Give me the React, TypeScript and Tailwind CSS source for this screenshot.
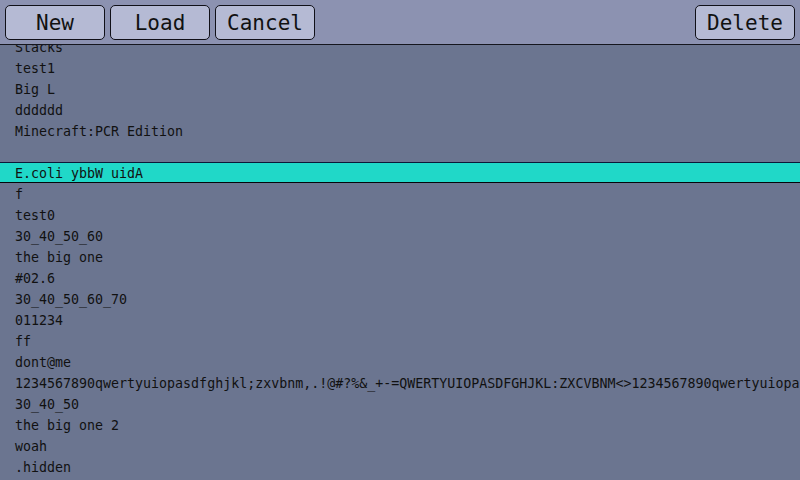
import React from "react";

const rows = [
  "Stacks",
  "test1",
  "Big L",
  "dddddd",
  "Minecraft:PCR Edition",
  "",
  "E.coli ybbW uidA",
  "f",
  "test0",
  "30_40_50_60",
  "the big one",
  "#02.6",
  "30_40_50_60_70",
  "011234",
  "ff",
  "dont@me",
  "1234567890qwertyuiopasdfghjkl;zxvbnm,.!@#?%&_+-=QWERTYUIOPASDFGHJKL:ZXCVBNM<>1234567890qwertyuiopasdfghjkl",
  "30_40_50",
  "the big one 2",
  "woah",
  ".hidden",
  "",
];

function Btn({ label }: { label: string }) {
  return (
    <button className="w-[100px] h-[35px] rounded-[5px] border border-[#101018] bg-[#b5bad4] text-[21px] leading-none text-[#111] flex items-center justify-center pt-[2px]">
      {label}
    </button>
  );
}

export default function App() {
  return (
    <div
      className="w-[800px] h-[480px] overflow-hidden flex flex-col bg-[#6b7590]"
      style={{ fontFamily: '"DejaVu Sans Mono", monospace' }}
    >
      <div className="h-[45px] shrink-0 bg-[#8c92b1] border-b border-[#15161e] flex items-start pt-[5px] px-[5px] gap-[5px] relative z-10">
        <Btn label="New" />
        <Btn label="Load" />
        <Btn label="Cancel" />
        <div className="flex-1" />
        <Btn label="Delete" />
      </div>
      <div className="flex-1 overflow-hidden">
        <div className="-mt-[9px] flex flex-col">
          {rows.map((r, i) =>
            i === 6 ? (
              <div
                key={i}
                className="h-[21px] shrink-0 border-t border-t-[#0c1838] border-b border-b-[#05060a] bg-[#20d8c8] pl-[15px] pt-[2px] text-[13.3px] leading-[17px] text-[#111] whitespace-nowrap"
              >
                {r}
              </div>
            ) : (
              <div
                key={i}
                className="h-[21px] shrink-0 pl-[15px] pt-[2px] text-[13.3px] leading-[19px] text-[#111] whitespace-nowrap"
              >
                {r}
              </div>
            )
          )}
        </div>
      </div>
    </div>
  );
}
